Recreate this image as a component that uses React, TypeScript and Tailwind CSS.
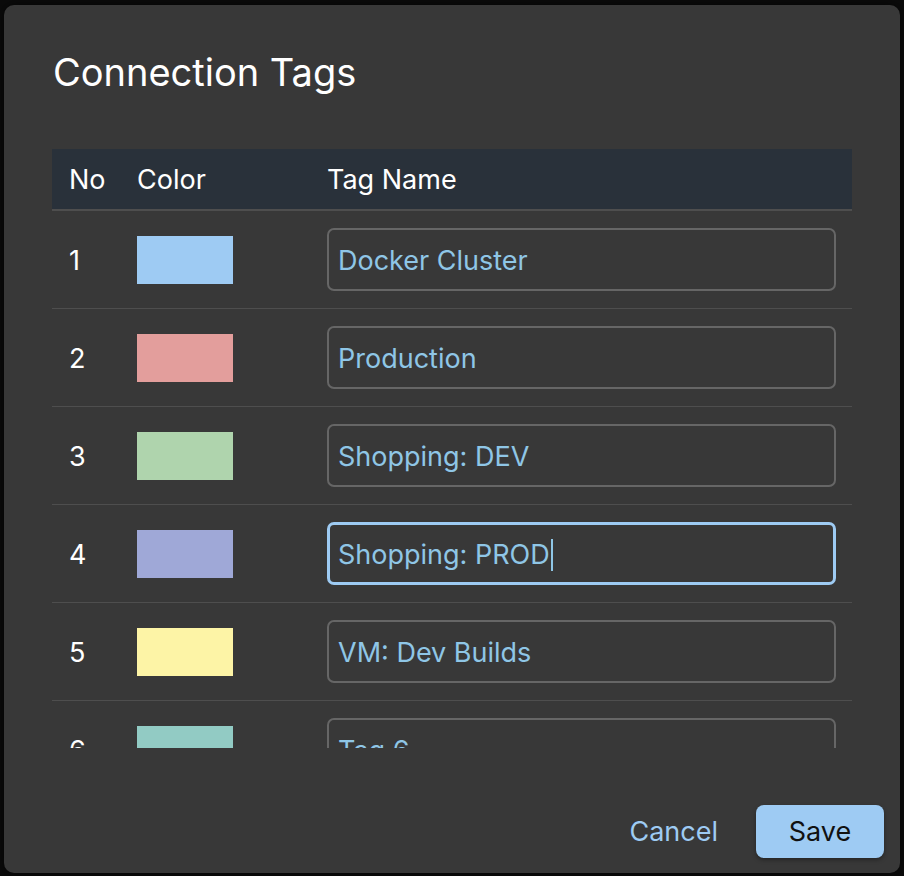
const tags = [
  { no: 1, color: "#9ecbf3", name: "Docker Cluster" },
  { no: 2, color: "#e39e9c", name: "Production" },
  { no: 3, color: "#afd4ad", name: "Shopping: DEV" },
  { no: 4, color: "#9fa8d7", name: "Shopping: PROD", focused: true },
  { no: 5, color: "#fdf4a6", name: "VM: Dev Builds" },
  { no: 6, color: "#92cbc4", name: "Tag 6" },
  { no: 7, color: "#c5a3d8", name: "Tag 7" },
];

const font = { fontFamily: "Inter, 'Noto Sans', sans-serif" };

const App = () => {
  return (
    <div className="h-[876px] w-[904px] overflow-hidden bg-[#0b0b0b] pl-[4px] pt-[5px]" style={font}>
      <div className="flex h-[868px] w-[896px] flex-col rounded-[10px] bg-[#383838] shadow-[0_0_12px_rgba(0,0,0,0.6)]">
        <h1 className="pl-[49px] pt-[44px] text-[38px] leading-[46px] font-normal text-white">Connection Tags</h1>

        <div className="mx-[48px] mt-[54px] h-[599px] overflow-hidden">
          <div className="flex h-[62px] items-center border-b-2 border-[#4e4e4e] bg-[#29313a] pt-[3px] text-[27px] text-white">
            <div className="w-[69px] pl-[17px]">No</div>
            <div className="w-[190px] pl-[16px]">Color</div>
            <div className="flex-1 pl-[16px]">Tag Name</div>
          </div>

          {tags.map((tag) => (
            <div key={tag.no} className="flex h-[98px] items-center border-b border-[#4e4e4e] text-[27px]">
              <div className="w-[69px] pl-[17px] pt-[3px] text-white">{tag.no}</div>
              <div className="w-[190px] pl-[16px]">
                <div className="h-[48px] w-[96px]" style={{ backgroundColor: tag.color }} />
              </div>
              <div className="flex-1 px-[16px]">
                <div
                  className={
                    tag.focused
                      ? "flex h-[63px] items-center rounded-[7px] border-[3px] border-[#9ecbf3] pl-[8px] pt-[3px] text-[#8fc6e6]"
                      : "flex h-[63px] items-center rounded-[7px] border-2 border-[#666666] pl-[9px] pt-[3px] text-[#8fc6e6]"
                  }
                >
                  {tag.name}
                  {tag.focused && <span className="ml-[1px] h-[32px] w-[2px] bg-[#8fc6e6]" />}
                </div>
              </div>
            </div>
          ))}
        </div>

        <div className="mt-auto flex items-center justify-end gap-[38px] pb-[15px] pr-[16px]">
          <button className="pt-[2px] text-[27px] text-[#9ecbf3]">Cancel</button>
          <button className="h-[53px] w-[128px] rounded-[8px] bg-[#9ecbf3] pt-[2px] text-[27px] text-[#111111] shadow-[0_2px_4px_rgba(0,0,0,0.35)]">
            Save
          </button>
        </div>
      </div>
    </div>
  );
};

export default App;
